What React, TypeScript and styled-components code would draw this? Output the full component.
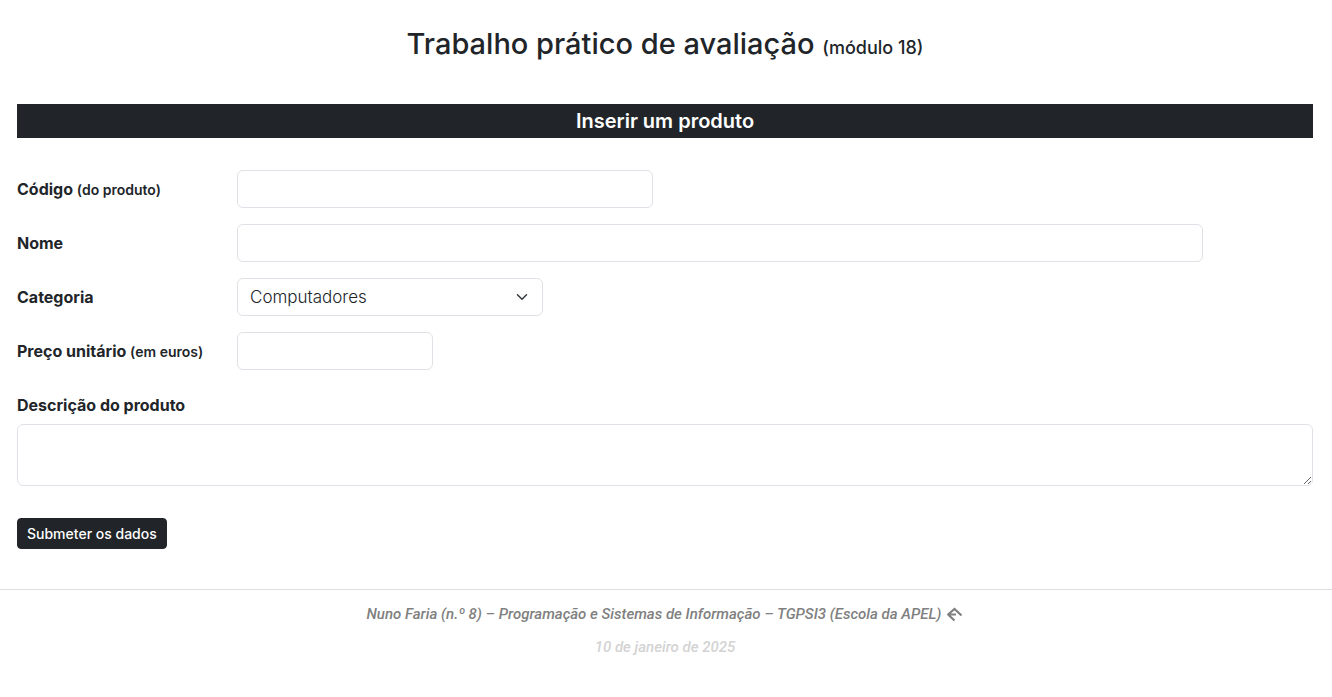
import React from "react";
import styled, { createGlobalStyle } from "styled-components";

const GlobalStyle = createGlobalStyle`
  *, *::before, *::after { box-sizing: border-box; }
  body {
    margin: 0;
    background: #fff;
    color: #212529;
    font-family: Inter, "Liberation Sans", sans-serif;
    font-size: 16px;
    line-height: 24px;
  }
`;

const Page = styled.main`
  padding: 24px 19px 0 17px;
`;

const Title = styled.h1`
  margin: 0 0 36px;
  font-size: 29px;
  font-weight: 500;
  line-height: 40px;
  text-align: center;
`;

const TitleNote = styled.small`
  font-size: 18px;
`;

const Banner = styled.h2`
  margin: 0 0 32px;
  background: #212529;
  color: #fff;
  font-size: 20px;
  font-weight: 600;
  line-height: 34px;
  text-align: center;
`;

const Form = styled.form`
  display: flex;
  flex-direction: column;
  gap: 16px;
  margin-bottom: 40px;
`;

const Row = styled.div`
  display: grid;
  grid-template-columns: repeat(12, minmax(0, 1fr));
  column-gap: 24px;
  align-items: center;
`;

const Label = styled.label`
  grid-column: span 2;
  font-weight: 700;
  white-space: nowrap;
`;

const LabelNote = styled.small`
  font-size: 14px;
  font-weight: 600;
`;

const Field = styled.div<{ $span: number }>`
  display: flex;
  grid-column: span ${(p) => p.$span};
  position: relative;
`;

const control = `
  width: 100%;
  border: 1px solid #dee2e6;
  border-radius: 6px;
  background: #fff;
  color: #212529;
  font: inherit;
  font-size: 17px;
  font-weight: 300;
`;

const Input = styled.input`
  ${control}
  height: 38px;
  padding: 6px 12px;
`;

const Select = styled.select`
  ${control}
  height: 38px;
  padding: 6px 36px 6px 12px;
  appearance: none;
`;

const Chevron = styled.svg`
  position: absolute;
  top: 13px;
  right: 12px;
  pointer-events: none;
`;

const Block = styled.div`
  display: flex;
  flex-direction: column;
  gap: 7px;
  padding-top: 7px;
`;

const TextArea = styled.textarea`
  ${control}
  display: block;
  height: 62px;
  padding: 6px 12px;
  resize: vertical;
`;

const Submit = styled.button`
  align-self: flex-start;
  margin-top: 16px;
  padding: 4px 9px;
  border: 1px solid #212529;
  border-radius: 4px;
  background: #212529;
  color: #fff;
  font: inherit;
  font-size: 14px;
  font-weight: 500;
  line-height: 21px;
`;

const Footer = styled.footer`
  padding: 12px 19px 24px 17px;
  border-top: 1px solid #dedede;
  color: #808080;
  font-family: Roboto, "Liberation Sans", sans-serif;
  font-size: 15px;
  font-style: italic;
  font-weight: 500;
  text-align: center;
`;

const Credit = styled.p`
  display: flex;
  align-items: center;
  justify-content: center;
  gap: 4px;
  margin: 0 0 9px;
`;

const DateLine = styled.p`
  margin: 0;
  color: #d3d3d3;
`;

const BackLink = styled.a`
  display: flex;
  color: inherit;
`;

export default function App() {
  return (
    <>
      <GlobalStyle />
      <Page>
        <Title>
          Trabalho prático de avaliação <TitleNote>(módulo 18)</TitleNote>
        </Title>
        <Banner>Inserir um produto</Banner>
        <Form onSubmit={(e) => e.preventDefault()}>
          <Row>
            <Label htmlFor="codigo">
              Código <LabelNote>(do produto)</LabelNote>
            </Label>
            <Field $span={4}>
              <Input id="codigo" type="text" />
            </Field>
          </Row>
          <Row>
            <Label htmlFor="nome">Nome</Label>
            <Field $span={9}>
              <Input id="nome" type="text" />
            </Field>
          </Row>
          <Row>
            <Label htmlFor="categoria">Categoria</Label>
            <Field $span={3}>
              <Select id="categoria" defaultValue="Computadores">
                <option>Computadores</option>
              </Select>
              <Chevron width="18" height="12" viewBox="0 0 16 16" aria-hidden="true">
                <path
                  d="m2 5 6 6 6-6"
                  fill="none"
                  stroke="#343a40"
                  strokeWidth="2"
                  strokeLinecap="round"
                  strokeLinejoin="round"
                />
              </Chevron>
            </Field>
          </Row>
          <Row>
            <Label htmlFor="preco">
              Preço unitário <LabelNote>(em euros)</LabelNote>
            </Label>
            <Field $span={2}>
              <Input id="preco" type="text" />
            </Field>
          </Row>
          <Block>
            <Label htmlFor="descricao">Descrição do produto</Label>
            <TextArea id="descricao" />
          </Block>
          <Submit type="submit">Submeter os dados</Submit>
        </Form>
      </Page>
      <Footer>
        <Credit>
          Nuno Faria (n.º 8) – Programação e Sistemas de Informação – TGPSI3 (Escola da APEL)
          <BackLink href="#" aria-label="Voltar">
            <svg width="18" height="18" viewBox="0 0 18 18" aria-hidden="true">
              <path
                d="M16.500 10.500 9.500 4 2.500 10M2.500 9.500H11M3 9.500l6.500 6"
                fill="none"
                stroke="currentColor"
                strokeWidth="2.200"
              />
            </svg>
          </BackLink>
        </Credit>
        <DateLine>10 de janeiro de 2025</DateLine>
      </Footer>
    </>
  );
}
